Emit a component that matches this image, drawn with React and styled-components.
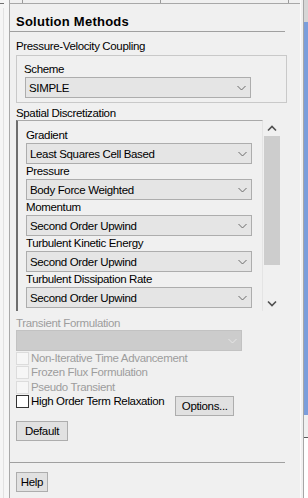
import React from "react";
import styled, { createGlobalStyle } from "styled-components";

const Global = createGlobalStyle`
  html, body { margin: 0; padding: 0; background: #f0f0f0; }
  body {
    font-family: "Liberation Sans", Arial, sans-serif;
    font-size: 11.5px;
    letter-spacing: -0.35px;
    color: #000;
  }
  #root { width: 308px; height: 498px; overflow: hidden; }
`;

const Screen = styled.div`
  display: grid;
  grid-template-columns: 9px 291px 3px 5px;
  height: 498px;
`;

const LeftStrip = styled.div`
  background: #f6f6f6;
  position: relative;
  &::before {
    content: "";
    position: absolute;
    left: 0;
    top: 3px;
    width: 4px;
    height: 1px;
    background: #707070;
  }
  &::after {
    content: "";
    position: absolute;
    left: 3px;
    top: 8px;
    bottom: 0;
    width: 1px;
    background: #e2e2e2;
  }
`;

const Main = styled.div`
  border-left: 1px solid #a9a9a9;
  background: #f0f0f0;
  display: flex;
  flex-direction: column;
`;

const TopBar = styled.div`
  height: 3px;
  border-bottom: 1px solid #a8a8a8;
  display: flex;
`;

const Tick = styled.span`
  width: 1px;
  height: 3px;
  background: #9a9a9a;
  margin-left: ${(p) => p.$at}px;
`;

const Title = styled.div`
  font-weight: bold;
  font-size: 13px;
  line-height: 16px;
  height: 16px;
  margin: 10px 0 1px 6px;
  letter-spacing: 0.25px;
`;

const Rule = styled.div`
  width: 275px;
  height: 1px;
  background: #a0a0a0;
`;

const Section = styled.div`
  padding-left: 6px;
  display: flex;
  flex-direction: column;
  align-items: flex-start;
`;

const Label = styled.div`
  line-height: ${(p) => p.$lh || 14}px;
  height: ${(p) => p.$lh || 14}px;
  margin-top: ${(p) => p.$mt || 0}px;
  color: ${(p) => (p.$disabled ? "#9d9d9d" : "#000")};
  white-space: nowrap;
`;

const GroupBox = styled.div`
  width: 262px;
  margin-top: 2px;
  border: 1px solid #c9c9c9;
  padding: 6px 0 4px 7px;
`;

const SelectBox = styled.div`
  box-sizing: border-box;
  width: 226px;
  height: 21px;
  margin-left: ${(p) => p.$ml || 0}px;
  margin-top: ${(p) => p.$mt || 0}px;
  background: ${(p) => (p.$disabled ? "#cccccc" : "#e5e5e5")};
  border: 1px solid ${(p) => (p.$disabled ? "#c2c2c2" : "#adadad")};
  display: flex;
  align-items: center;
  justify-content: space-between;
  padding: 0 4px 0 3px;
  white-space: nowrap;
`;

const Chevron = ({ light }) => (
  <svg width="9" height="6" viewBox="0 0 9 6">
    <path
      d="M0.5 1 L4.5 5 L8.5 1"
      fill="none"
      stroke={light ? "#e6e6e6" : "#6a6a6a"}
      strokeWidth="1"
    />
  </svg>
);

const Select = ({ value, disabled, ml, mt }) => (
  <SelectBox $disabled={disabled} $ml={ml} $mt={mt}>
    <span>{value}</span>
    <Chevron light={disabled} />
  </SelectBox>
);

const ScrollRow = styled.div`
  display: flex;
  gap: 1px;
  height: 191px;
`;

const Pane = styled.div`
  box-sizing: border-box;
  width: 247px;
  height: 191px;
  border-left: 2px solid #6e6e6e;
  border-top: 1px solid #a9a9a9;
  border-right: 1px solid #e4e4e4;
  padding: 7px 0 0 8px;
  overflow: hidden;
`;

const ScrollBar = styled.div`
  width: 16px;
  display: flex;
  flex-direction: column;
`;

const ArrowBtn = styled.div`
  height: 16px;
  display: flex;
  align-items: center;
  justify-content: center;
`;

const Track = styled.div`
  flex: 1;
  display: flex;
  flex-direction: column;
`;

const Thumb = styled.div`
  height: 129px;
  background: #cdcdcd;
`;

const Arrow = ({ up }) => (
  <svg width="10" height="7" viewBox="0 0 10 7">
    <path
      d={up ? "M1 5.5 L5 1.5 L9 5.5" : "M1 1.5 L5 5.5 L9 1.5"}
      fill="none"
      stroke="#505050"
      strokeWidth="1.6"
    />
  </svg>
);

const CheckRow = styled.div`
  display: flex;
  align-items: flex-start;
  height: ${(p) => p.$h}px;
`;

const Box = styled.span`
  box-sizing: border-box;
  width: 13px;
  height: 13px;
  margin-top: 1px;
  border: 1px solid ${(p) => (p.$disabled ? "#dcdcdc" : "#333333")};
  background: ${(p) => (p.$disabled ? "#f6f6f6" : "#ffffff")};
  flex: none;
`;

const CheckText = styled.span`
  margin-left: 2px;
  line-height: 14px;
  color: ${(p) => (p.$disabled ? "#9d9d9d" : "#000")};
  white-space: nowrap;
`;

const Button = styled.button`
  box-sizing: border-box;
  height: 20px;
  width: ${(p) => p.$w}px;
  margin-left: ${(p) => p.$ml || 0}px;
  margin-top: ${(p) => p.$mt || 0}px;
  padding: 0;
  background: #e1e1e1;
  border: 1px solid #adadad;
  border-radius: 0;
  font: inherit;
  letter-spacing: inherit;
  color: #000;
  line-height: 18px;
`;

const Spacer = styled.div`
  flex: 1;
`;

const GapCol = styled.div`
  background: #f0f0f0;
  border-left: 1px solid #fbfbfb;
`;

const RightStrip = styled.div`
  border-left: 1px solid #a6a6a6;
  display: flex;
  flex-direction: column;
`;

const StripPart = styled.div`
  height: ${(p) => (p.$h ? `${p.$h}px` : "auto")};
  flex: ${(p) => (p.$h ? "none" : 1)};
  background: ${(p) => p.$bg};
  border-top: ${(p) => (p.$edge ? "1px solid #5a5a5a" : "0")};
`;

const combos = [
  ["Gradient", "Least Squares Cell Based"],
  ["Pressure", "Body Force Weighted"],
  ["Momentum", "Second Order Upwind"],
  ["Turbulent Kinetic Energy", "Second Order Upwind"],
  ["Turbulent Dissipation Rate", "Second Order Upwind"],
];

const checks = [
  ["Non-Iterative Time Advancement", 14],
  ["Frozen Flux Formulation", 15],
  ["Pseudo Transient", 14],
];

export default function App() {
  return (
    <>
      <Global />
      <Screen>
        <LeftStrip />
        <Main>
          <TopBar>
            <Tick $at={12} />
            <Tick $at={137} />
            <Tick $at={127} />
          </TopBar>
          <Title>Solution Methods</Title>
          <Rule />
          <Section>
            <Label $mt={7}>Pressure-Velocity Coupling</Label>
            <GroupBox>
              <Label>Scheme</Label>
              <Select value="SIMPLE" ml={1} mt={1} />
            </GroupBox>
            <Label $mt={3}>Spatial Discretization</Label>
            <ScrollRow>
              <Pane>
                {combos.map(([label, value]) => (
                  <React.Fragment key={label}>
                    <Label $lh={15}>{label}</Label>
                    <Select value={value} />
                  </React.Fragment>
                ))}
              </Pane>
              <ScrollBar>
                <ArrowBtn>
                  <Arrow up />
                </ArrowBtn>
                <Track>
                  <Thumb />
                </Track>
                <ArrowBtn>
                  <Arrow />
                </ArrowBtn>
              </ScrollBar>
            </ScrollRow>
            <Label $mt={5} $disabled>
              Transient Formulation
            </Label>
            <Select value="" disabled />
            {checks.map(([text, h]) => (
              <CheckRow key={text} $h={h}>
                <Box $disabled />
                <CheckText $disabled>{text}</CheckText>
              </CheckRow>
            ))}
            <CheckRow $h={22}>
              <Box />
              <CheckText>High Order Term Relaxation</CheckText>
              <Button $w={59} $ml={11} $mt={2}>
                Options...
              </Button>
            </CheckRow>
            <Button $w={52} $mt={5}>
              Default
            </Button>
          </Section>
          <Spacer />
          <Rule />
          <Section>
            <Button $w={32} $mt={9}>
              Help
            </Button>
          </Section>
          <div style={{ height: 6 }} />
        </Main>
        <GapCol />
        <RightStrip>
          <StripPart $h={22} $bg="#d6d6d6" />
          <StripPart $h={393} $bg="#7b9edb" />
          <StripPart $h={22} $bg="#f0f0f0" />
          <StripPart $bg="#ffffff" $edge />
        </RightStrip>
      </Screen>
    </>
  );
}
